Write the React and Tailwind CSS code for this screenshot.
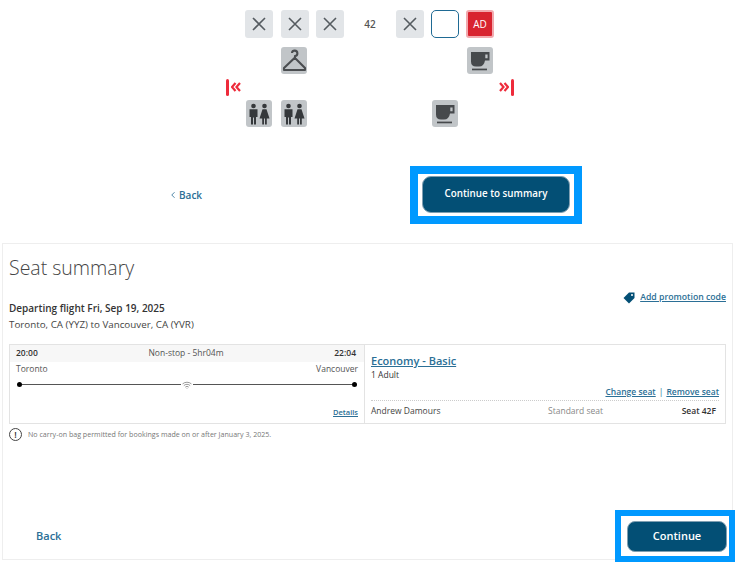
import React from "react";
import { ChevronLeft, Wifi } from "lucide-react";

const XSeat = () => (
  <div className="w-[28px] h-[28px] rounded-[3px] bg-[#e2e5e8] flex items-center justify-center">
    <svg width="16" height="16" viewBox="0 0 16 16" stroke="#555b60" strokeWidth="1.6" fill="none">
      <path d="M2 2 L14 14 M14 2 L2 14" />
    </svg>
  </div>
);

const Amenity = ({ children, className = "" }) => (
  <div className={"w-[26px] h-[27px] rounded-[3px] bg-[#c1c5c8] flex items-center justify-center " + className}>
    {children}
  </div>
);

const Cup = () => (
  <svg width="22" height="22" viewBox="0 0 22 22" fill="#46494c">
    <path d="M2 2 H20.5 V10.5 H16 Q15 16.5 10 16.5 H7 Q2 16.5 2 11.5 Z M16.3 4.5 V8.2 H18.6 V4.5 Z" fillRule="evenodd" />
    <rect x="3" y="18.6" width="15" height="1.7" />
  </svg>
);

const Hanger = () => (
  <svg width="25" height="25" viewBox="0 0 25 25" fill="none" stroke="#4a4d50" strokeWidth="2.1" strokeLinejoin="round">
    <path d="M10 5 A2.7 2.7 0 1 1 13 8 V10 L23 20 V22 H2 V20 L12.5 10" />
  </svg>
);

const Toilet = () => (
  <svg width="24" height="24" viewBox="0 0 24 24" fill="#35383b">
    <circle cx="6.5" cy="4" r="2.3" />
    <path d="M2.5 7.2 H10.5 V15 H9 V22.5 H7 V15.5 H6 V22.5 H4 V15 H2.5 Z" />
    <circle cx="17.5" cy="4" r="2.3" />
    <path d="M15.5 7.2 H19.5 L22.5 16.5 H19.8 V22.5 H18 V16.5 H17 V22.5 H15.2 V16.5 H12.5 Z" />
  </svg>
);

const ExitLeft = () => (
  <div className="flex items-center gap-[2px] text-[#ee2b3b]">
    <div className="w-[3px] h-[17px] bg-[#ee2b3b] rounded-sm" />
    <svg width="10" height="10" viewBox="0 0 10 10" fill="none" stroke="currentColor" strokeWidth="2.2">
      <path d="M4.5 1 L1 5 L4.5 9 M9 1 L5.5 5 L9 9" />
    </svg>
  </div>
);

const ExitRight = () => (
  <div className="flex items-center gap-[2px] text-[#ee2b3b]">
    <svg width="10" height="10" viewBox="0 0 10 10" fill="none" stroke="currentColor" strokeWidth="2.2">
      <path d="M1 1 L4.5 5 L1 9 M5.5 1 L9 5 L5.5 9" />
    </svg>
    <div className="w-[3px] h-[17px] bg-[#ee2b3b] rounded-sm" />
  </div>
);

export default function App() {
  return (
    <div className="w-[739px] h-[575px] bg-white overflow-hidden text-[#333] font-['Open_Sans',sans-serif]">
      {/* seat map */}
      <div className="h-[243px] pt-[10px]">
        <div className="ml-[245px] flex items-center">
          <div className="flex gap-[7.5px]">
            <XSeat />
            <XSeat />
            <XSeat />
          </div>
          <span className="w-[52px] text-center text-[10px] font-semibold text-[#555]">42</span>
          <div className="flex gap-[7px]">
            <XSeat />
            <div className="w-[28px] h-[28px] rounded-[5px] border-[1.5px] border-[#1f6a94] bg-white" />
            <div className="w-[28px] h-[28px] rounded-[3px] bg-[#d8232f] border-[2px] border-[#f2a9ae] flex items-center justify-center text-[10px] text-white">
              AD
            </div>
          </div>
        </div>
        <div className="ml-[281px] w-[212px] mt-[9px] flex justify-between">
          <Amenity><Hanger /></Amenity>
          <Amenity><Cup /></Amenity>
        </div>
        <div className="ml-[226px] w-[288px] h-[26px] flex items-center justify-between">
          <ExitLeft />
          <ExitRight />
        </div>
        <div className="ml-[246px] flex gap-[9px]">
          <Amenity><Toilet /></Amenity>
          <Amenity><Toilet /></Amenity>
          <Amenity className="ml-[116px]"><Cup /></Amenity>
        </div>
        <div className="mt-[39px] flex items-center">
          <a className="ml-[168px] w-[242px] flex items-center text-[10px] font-semibold text-[#2b6f96]">
            <ChevronLeft size={10} strokeWidth={2} className="mr-[1px]" />
            Back
          </a>
          <div className="w-[172px] h-[58px] border-[8px] border-[#0099ff] px-[4px] pt-[2px]">
            <button className="w-[148px] h-[37px] rounded-[9px] bg-[#034f75] border border-[#7f9fb2] text-[9.8px] font-semibold text-white">
              Continue to summary
            </button>
          </div>
        </div>
      </div>

      {/* seat summary */}
      <div className="ml-[2px] w-[731px] h-[317px] border border-[#eeeeee] pl-[6px] pr-[6px] flex flex-col">
        <h1 className="mt-[11px] text-[19.5px] leading-[26px] font-light text-[#444]">Seat summary</h1>
        <div className="mt-[20px] flex justify-between items-start">
          <div>
            <div className="text-[10px] leading-[14px] font-semibold text-[#333]">Departing flight Fri, Sep 19, 2025</div>
            <div className="mt-[3px] text-[9.8px] leading-[14px] text-[#444]">Toronto, CA (YYZ) to Vancouver, CA (YVR)</div>
          </div>
          <div className="flex items-center gap-[5px] -mt-[10px]">
            <svg width="12" height="12" viewBox="0 0 12 12" fill="#034f75">
              <path d="M6 .5 H11.5 V6 L6 11.5 L.5 6 Z" />
              <circle cx="9" cy="3" r="1" fill="#fff" />
            </svg>
            <a className="text-[8.7px] font-semibold underline text-[#2b6f96]">Add promotion code</a>
          </div>
        </div>

        <div className="mt-[12px] h-[80px] shrink-0 flex border border-[#e3e3e3]">
          <div className="w-[355px] flex flex-col border-r border-[#e3e3e3]">
            <div className="h-[17px] bg-[#f7f7f7] px-[6px] flex items-center justify-between text-[8.5px]">
              <span className="font-semibold">20:00</span>
              <span className="text-[#555]">Non-stop - 5hr04m</span>
              <span className="font-semibold mr-[2px]">22:04</span>
            </div>
            <div className="px-[6px] mt-[1px] flex justify-between text-[8.5px] text-[#555]">
              <span>Toronto</span>
              <span>Vancouver</span>
            </div>
            <div className="px-[7px] mt-[4px] flex items-center">
              <div className="w-[5px] h-[5px] rounded-full bg-black" />
              <div className="flex-1 h-px bg-[#555]" />
              <Wifi size={10} strokeWidth={1.6} className="mx-[1px] text-[#666]" />
              <div className="flex-1 h-px bg-[#555]" />
              <div className="w-[5px] h-[5px] rounded-full bg-black" />
            </div>
            <div className="mt-auto px-[6px] pb-[5px] text-right text-[7.5px] leading-[11px] font-semibold underline text-[#2b6f96]">
              Details
            </div>
          </div>
          <div className="flex-1 px-[6px] pt-[8px] flex flex-col">
            <a className="text-[11px] leading-[15px] font-semibold underline text-[#2b6f96]">Economy - Basic</a>
            <div className="text-[8.5px] leading-[12px] mt-[1px]">1 Adult</div>
            <div className="mt-[5px] text-right text-[8.5px] leading-[12px] font-semibold text-[#2b6f96]">
              <a className="underline">Change seat</a>
              <span className="mx-[3px] font-normal">|</span>
              <a className="underline">Remove seat</a>
            </div>
            <div className="mt-[2px] pt-[4px] border-t border-dotted border-[#ccc] flex text-[8.5px] leading-[12px]">
              <span className="w-[177px] text-[#444]">Andrew Damours</span>
              <span className="text-[#888]">Standard seat</span>
              <span className="ml-auto mr-[3px] font-semibold">Seat 42F</span>
            </div>
          </div>
        </div>

        <div className="mt-[4px] flex items-center gap-[6px]">
          <div className="w-[13px] h-[13px] rounded-full border border-[#444] flex items-center justify-center text-[9px] leading-none font-semibold">
            !
          </div>
          <span className="text-[7.1px] text-[#777]">No carry-on bag permitted for bookings made on or after January 3, 2025.</span>
        </div>

        <div className="mt-auto -mr-[9px] -mb-[3px] pl-[27px] flex items-center justify-between">
          <a className="text-[11px] font-semibold text-[#2b6f96]">Back</a>
          <div className="w-[120px] h-[52px] border-[6px] border-[#0099ff] pl-[5px] pt-[4px]">
            <button className="w-[100px] h-[31px] ml-px mt-px rounded-[8px] bg-[#034f75] border border-[#7f9fb2] text-[11px] font-semibold text-white">
              Continue
            </button>
          </div>
        </div>
      </div>
    </div>
  );
}
